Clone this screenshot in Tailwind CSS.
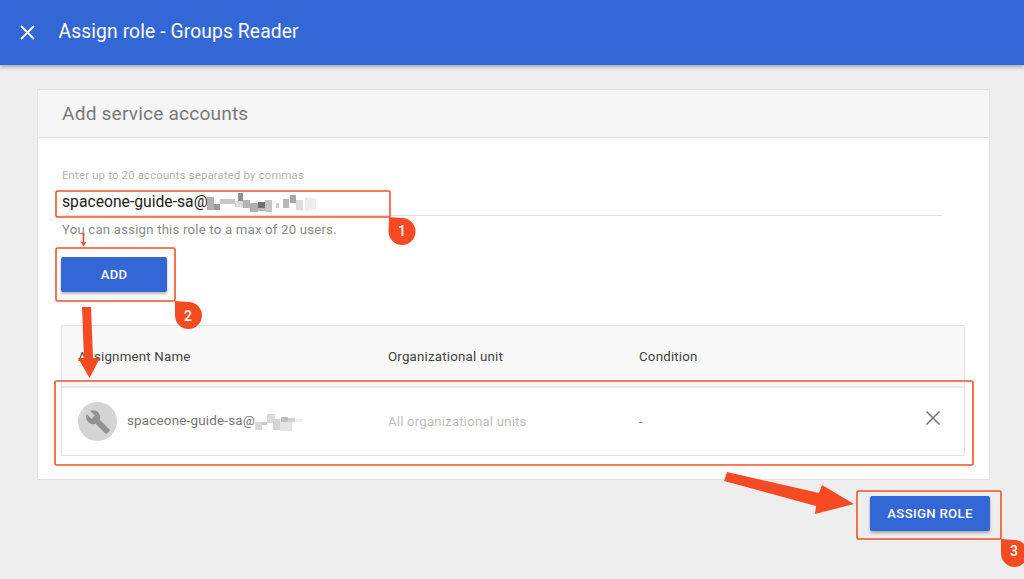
<!DOCTYPE html>
<html lang="en">
<head>
    <meta charset="UTF-8">
    <title>Assign role - Groups Reader</title>
    <script src="https://cdn.jsdelivr.net/npm/@tailwindcss/browser@4"></script>
</head>
<body class="relative w-[1024px] h-[579px] overflow-hidden bg-[#eeeeee] font-['Roboto',sans-serif]">
    <!-- Header -->
    <header class="h-[65px] bg-[#3367d6] flex items-center pl-[20px] shadow-[0_2px_4px_rgba(0,0,0,0.3)] text-white">
        <svg class="w-[15px] h-[15px]" viewBox="0 0 15 15" fill="none" stroke="white" stroke-width="1.9"><path d="M1 1l13 13M14 1L1 14"/></svg>
        <h1 class="ml-[23.5px] text-[19.3px] leading-none tracking-[0.1px] -mt-[1px]">Assign role - Groups Reader</h1>
    </header>

    <main class="pt-[24px] pl-[37px]">
        <div class="w-[953px] h-[391px] bg-white border border-[#e2e2e2] flex flex-col">
            <div class="h-[48px] shrink-0 bg-[#f5f5f5] border-b border-[#e2e2e2] pl-[24px] pt-[2px] flex items-center text-[19.2px] text-[#7b7b7b] tracking-[0.15px]">Add service accounts</div>

            <div class="pl-[24px] pr-[23px] flex flex-col flex-1">
                <div class="mt-[31px] text-[11.3px] leading-[14px] text-[#b4b4b4] tracking-[0.2px]">Enter up to 20 accounts separated by commas</div>
                <div class="mt-[6px] w-[880px] h-[27px] border-b border-[#e2e2e2] text-[15.7px] leading-[26px] text-[#212121]">spaceone-guide-sa@</div>
                <div class="mt-[5px] text-[13.2px] leading-[17px] text-[#8a8a8a] tracking-[0.2px]">You can assign this role to a max of 20 users.</div>
                <button class="mt-[19px] -ml-[1px] w-[106px] h-[35px] bg-[#3367d6] rounded-[2px] text-white text-[13px] font-medium tracking-[0.3px] shadow-[0_2px_3px_rgba(0,0,0,0.3)]">ADD</button>

                <!-- Assignment table -->
                <div class="mt-[33px] -ml-[1px] w-[904px] h-[131px] border border-[#e2e2e2] rounded-[2px] flex flex-col">
                    <div class="h-[62px] shrink-0 bg-[#f8f8f8] border-b-2 border-[#e8e8e8] pt-[2px] flex items-center text-[13.3px] text-[#424242] tracking-[0.2px]">
                        <div class="w-[326px] pl-[16px]">Assignment Name</div>
                        <div class="w-[251px]">Organizational unit</div>
                        <div>Condition</div>
                    </div>
                    <div class="flex-1 flex items-center">
                        <div class="w-[326px] pl-[16px] flex items-center">
                            <div class="w-[39px] h-[39px] rounded-full bg-[#d4d4d4] flex items-center justify-center">
                                <svg class="w-[26px] h-[26px]" viewBox="0 0 24 24" fill="#929292"><path d="M22.7 19l-9.1-9.1c.9-2.3.4-5-1.5-6.9-2-2-5-2.400-7.400-1.300L9 6 6 9 1.600 4.700C.400 7.100.900 10.100 2.900 12.100c1.900 1.900 4.600 2.400 6.900 1.500l9.100 9.100c.400.400 1 .400 1.400 0l2.300-2.300c.500-.400.500-1.100.100-1.400z"/></svg>
                            </div>
                            <span class="ml-[10px] text-[13.4px] text-[#757575] tracking-[0.2px]">spaceone-guide-sa@</span>
                        </div>
                        <div class="w-[251px] text-[13.2px] text-[#bdbdbd] tracking-[0.2px]">All organizational units</div>
                        <div class="text-[13px] text-[#757575]">-</div>
                        <svg class="absolute left-[926px] top-[411px] w-[14px] h-[14px]" viewBox="0 0 14 14" fill="none" stroke="#757575" stroke-width="1.5"><path d="M.5.5l13 13M13.500.5l-13 13"/></svg>
                    </div>
                </div>
            </div>
        </div>
        <button class="absolute left-[870px] top-[496px] w-[120px] h-[35px] bg-[#3367d6] rounded-[2px] text-white text-[13.2px] font-medium tracking-[0.3px] shadow-[0_2px_3px_rgba(0,0,0,0.3)]">ASSIGN ROLE</button>
    </main>

    <!-- Pixelated e-mail parts and red annotations laid over the page -->
    <svg class="absolute left-0 top-0 pointer-events-none" width="1024" height="579" viewBox="0 0 1024 579">
        <g class="blur-[0.6px]">
            <rect x="207" y="197" width="7" height="13" fill="#b0b0b0"/>
            <rect x="214" y="204" width="6" height="6" fill="#999999"/>
            <rect x="220" y="199" width="15" height="5" fill="#c8c8c8"/>
            <rect x="235" y="201" width="8" height="6" fill="#dcdcdc"/>
            <rect x="238" y="193" width="5" height="8" fill="#909090"/>
            <rect x="243" y="200" width="7" height="8" fill="#b5b5b5"/>
            <rect x="250" y="203" width="8" height="9" fill="#b0b0b0"/>
            <rect x="258" y="202" width="7" height="6" fill="#707070"/>
            <rect x="258" y="208" width="7" height="3" fill="#b8b8b8"/>
            <rect x="265" y="200" width="7" height="12" fill="#c4c4c4"/>
            <rect x="276" y="203" width="3" height="5" fill="#cccccc"/>
            <rect x="283" y="199" width="6" height="9" fill="#b8b8b8"/>
            <rect x="290" y="195" width="6" height="8" fill="#a8a8a8"/>
            <rect x="296" y="200" width="7" height="10" fill="#dddddd"/>
            <rect x="305" y="198" width="11" height="12" fill="#eeeeee"/>
            <rect x="255" y="422" width="7" height="8" fill="#d8d8d8"/>
            <rect x="262" y="422" width="5" height="3" fill="#cccccc"/>
            <rect x="267" y="414" width="8" height="9" fill="#dcdcdc"/>
            <rect x="273" y="419" width="7" height="11" fill="#d4d4d4"/>
            <rect x="280" y="422" width="12" height="9" fill="#e4e4e4"/>
            <rect x="281" y="417" width="7" height="5" fill="#c0c0c0"/>
            <rect x="288" y="418" width="7" height="4" fill="#cfcfcf"/>
            <rect x="295" y="419" width="8" height="3" fill="#f0f0f0"/>
        </g>
        <g fill="none" stroke="#f4502a" stroke-width="1.6">
            <rect x="56" y="191" width="334" height="26" rx="1.500"/>
            <rect x="56" y="248" width="119" height="53" rx="1.500"/>
            <rect x="55" y="381" width="918" height="84" rx="1.500"/>
            <rect x="857" y="491" width="144" height="48" rx="1.500"/>
        </g>
        <g fill="#f64a22">
            <path d="M389 217l13 1a13.500 13.500 0 1 1-13.500 13.500z"/>
            <path d="M175 301l14 1a13.500 13.500 0 1 1-14 13.500z"/>
            <path d="M1001 539l13 1a13.500 13.500 0 1 1-13 13.500z"/>
            <path d="M82.500 233h2l-.3 9h2l-2.700 4.500-2.700-4.500h2z"/>
            <path d="M82 307h9l2 51h7l-10.500 20-11.500-20h6z"/>
            <path d="M727 472l-3 9 92 25-1 8 39-10-32-19-3 8z"/>
        </g>
    </svg>
    <span class="absolute left-[397px] top-[222px] w-[10px] text-center text-white text-[14px] leading-[18px] font-medium">1</span>
    <span class="absolute left-[183px] top-[307px] w-[10px] text-center text-white text-[14px] leading-[18px] font-medium">2</span>
    <span class="absolute left-[1009px] top-[542px] w-[10px] text-center text-white text-[14px] leading-[18px] font-medium">3</span>
</body>
</html>
